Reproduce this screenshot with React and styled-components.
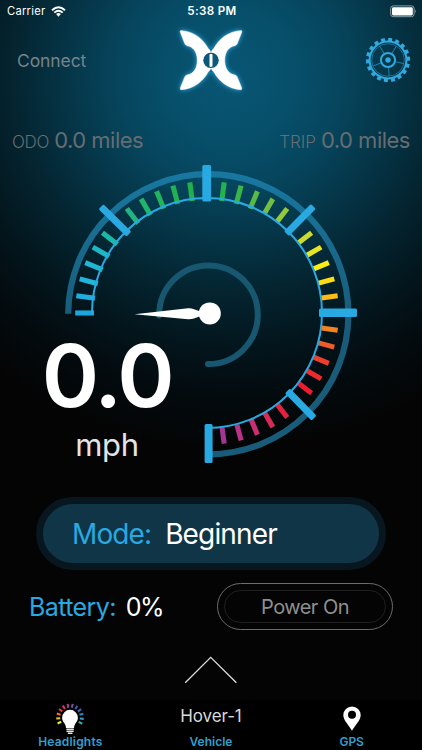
import React from "react";
import styled, { createGlobalStyle } from "styled-components";

const Global = createGlobalStyle`
  * { box-sizing: border-box; }
  html, body { margin: 0; padding: 0; background: #040404; }
  body { font-family: Inter, "Liberation Sans", sans-serif; overflow: hidden; }
  button { font-family: inherit; border: 0; background: none; padding: 0; }
  svg { display: block; flex: none; }
`;

const BLUE = "#29a9e1";

const Screen = styled.main`
  width: 422px;
  height: 750px;
  display: flex;
  flex-direction: column;
  overflow: hidden;
  color: #fff;
  background: radial-gradient(circle at 230px 75px,
    #085674 0, #07506c 60px, #06465e 110px, #053547 165px,
    #042531 215px, #03161d 270px, #030b0f 320px, #040404 375px);
`;

const Text = styled.span`
  font-size: ${(p) => p.$size}px;
  line-height: 1;
  font-weight: ${(p) => p.$weight || 400};
  letter-spacing: ${(p) => p.$track || 0}px;
  color: ${(p) => p.$color || "#fff"};
  white-space: pre;
`;

const StatusBar = styled.header`
  height: 22px;
  flex: none;
  display: grid;
  grid-template-columns: 1fr auto 1fr;
  align-items: center;
  padding: 1px 5px 0 7px;
`;

const Carrier = styled.div`
  display: flex;
  align-items: center;
  gap: 6px;
`;

const BatteryIcon = styled.svg`
  justify-self: end;
  margin-bottom: 1px;
`;

const TopBar = styled.nav`
  height: 86px;
  flex: none;
  display: grid;
  grid-template-columns: 165px 90px 1fr;
  align-items: start;
`;

const Connect = styled.button`
  justify-self: start;
  display: flex;
  padding: 30px 0 0 17px;
`;

const Settings = styled.button`
  justify-self: end;
  padding: 15px 11px 0 0;
`;

const Trips = styled.section`
  height: 47px;
  flex: none;
  display: flex;
  justify-content: space-between;
  align-items: flex-start;
  padding: 21px 12px 0 12px;
`;

const Reading = styled.div`
  display: flex;
  align-items: baseline;
  gap: 5px;
`;

const GaugeArea = styled.section`
  height: 330px;
  flex: none;
  display: grid;
  grid-template-columns: 422px;
  grid-template-rows: 330px;
`;

const Dial = styled.svg`
  grid-area: 1 / 1;
`;

const Speed = styled.div`
  grid-area: 1 / 1;
  align-self: end;
  justify-self: start;
  width: 132px;
  height: 153px;
  margin-left: 41px;
  display: flex;
  flex-direction: column;
  align-items: center;
  gap: 10px;
`;

const Mode = styled.button`
  width: 350px;
  height: 73px;
  flex: none;
  margin: 12px 0 0 36px;
  padding: 0 0 0 29px;
  display: flex;
  align-items: center;
  gap: 14px;
  border: 7px solid #08171f;
  border-radius: 37px;
  background: #103547;
`;

const PowerRow = styled.section`
  height: 47px;
  flex: none;
  margin-top: 13px;
  padding: 0 29px 0 29px;
  display: flex;
  align-items: center;
  justify-content: space-between;
`;

const Charge = styled.div`
  display: flex;
  gap: 10px;
  padding-top: 1px;
`;

const Power = styled.button`
  width: 176px;
  height: 47px;
  padding: 6px;
  border: 1px solid #6b6b6b;
  border-radius: 24px;
`;

const PowerInner = styled.span`
  height: 33px;
  display: flex;
  align-items: center;
  justify-content: center;
  border: 1px solid #202020;
  border-radius: 17px;
`;

const Expand = styled.button`
  height: 70px;
  flex: none;
  padding-top: 26px;
  display: flex;
  justify-content: center;
`;

const TabBar = styled.footer`
  height: 50px;
  flex: none;
  display: grid;
  grid-template-columns: repeat(3, 1fr);
  background: #000;
`;

const Tab = styled.button`
  display: flex;
  flex-direction: column;
  align-items: center;
  justify-content: space-between;
  padding: ${(p) => p.$top}px 0 2px;
`;

const polar = (cx, cy, r, deg) => {
  const a = (deg * Math.PI) / 180;
  return [cx + r * Math.sin(a), cy - r * Math.cos(a)];
};

const tickColors = [
  "#1ca6df", "#20addf", "#20b5dc", "#1eb8d4", "#1cb9c5", "#19b8a9", null,
  "#20b583", "#20b46d", "#22b35c", "#22b152", "#22b04c", null,
  "#24b24c", "#3bb54a", "#57b947", "#73bf44", "#91c83e", null,
  "#cbdb2f", "#e9e51f", "#fbed14", "#fddc12", "#fdbd19", null,
  "#f58220", "#f15a29", "#ee3e2c", "#ed2a2d", "#ec1c30", null,
  "#e4213f", "#d92a55", "#cb2f72", "#b93285", "#a33594", null,
];

const majors = [
  [206.7, 166.5, 206.7, 200, 8.8],
  [102, 207.8, 127.8, 233, 7],
  [312.3, 207.5, 287.5, 232.5, 7],
  [320.5, 312.8, 355.5, 312.8, 8.6],
  [288.5, 392, 313, 417, 7],
  [208.6, 425.5, 208.6, 461.5, 8],
];

function Gauge() {
  return (
    <Dial width="422" height="330" viewBox="0 155 422 330">
      <defs>
        <linearGradient id="track" gradientUnits="userSpaceOnUse" x1="0" y1="172" x2="0" y2="320">
          <stop offset="0" stopColor="#1878a1" />
          <stop offset="1" stopColor="#185c79" />
        </linearGradient>
      </defs>
      <path d="M68.2 313.8A140.1 140.1 0 1 1 208.3 454.4" fill="none" stroke="url(#track)" strokeWidth="6.2" />
      <path d="M159.2 315.5A49.3 49.3 0 1 1 208 364" fill="none" stroke="#185770" strokeWidth="6" strokeLinecap="round" />
      {tickColors.map((color, i) => {
        if (!color) return null;
        const deg = -90 + i * 7.5;
        const [x1, y1] = polar(207, 313, i < 16 ? 113 : 115.5, deg);
        const [x2, y2] = polar(207, 313, 131.8, deg);
        return <line key={i} x1={x1} y1={y1} x2={x2} y2={y2} stroke={color} strokeWidth="5.1" />;
      })}
      <path d="M92 313.5A115 115 0 1 1 207 428" fill="none" stroke={BLUE} strokeWidth="2" />
      {majors.map(([x1, y1, x2, y2, w]) => {
        const len = Math.hypot(x2 - x1, y2 - y1) + 3;
        const deg = (Math.atan2(y2 - y1, x2 - x1) * 180) / Math.PI;
        return (
          <rect
            key={`${x1}-${y1}`}
            x={-len / 2}
            y={-w / 2}
            width={len}
            height={w}
            rx="1.6"
            fill={BLUE}
            transform={`translate(${(x1 + x2) / 2} ${(y1 + y2) / 2}) rotate(${deg})`}
          />
        );
      })}
      <path d="M134.5 314.3L188 308.3Q191 308 194 309.3L202 312V315.5L194 318.5Q191 319.4 188 319.2Z" fill="#fff" />
      <circle cx="209.8" cy="313.4" r="11" fill="#fff" />
    </Dial>
  );
}

const wing =
  "M45 34Q47 31 51 32C88 36 114 57 129 85Q132 90 137 92V98A23 23 0 0 0 137 144V149Q132 151 129 156C114 184 88 205 50 209Q45 210 46 204L60 170Q62 166 67 165C85 162 97 146 97 121C97 96 85 80 67 77Q62 76 60 72Z";

function Logo() {
  return (
    <svg width="90" height="86" viewBox="0 6 270 258">
      <defs>
        <filter id="glow" x="-30%" y="-30%" width="160%" height="160%">
          <feDropShadow dx="0" dy="0" stdDeviation="8" floodColor="#32b4f0" floodOpacity="1" />
        </filter>
      </defs>
      <g filter="url(#glow)" fill="#fff" stroke="#fff" strokeWidth="1.5" strokeLinejoin="round">
        <path d={wing} />
        <path d={wing} transform="translate(276 0) scale(-1 1)" />
      </g>
      <circle cx="138" cy="121" r="22.5" fill="#0b5878" />
      <path d="M138 86V94M138 148V156" stroke="#0b5878" strokeWidth="3" />
      <rect x="133.5" y="102" width="9" height="38" rx="2" fill="#fff" />
    </svg>
  );
}

function Gear() {
  const teeth = Array.from({ length: 18 }, (_, i) => i * 20 + 6);
  const spokes = [-31, 31, 103, 176, 248];
  return (
    <svg width="46" height="46" viewBox="-23 -23 46 46" fill="none" stroke="#31a8df">
      <circle r="18.4" strokeWidth="2" />
      <circle r="16.3" strokeWidth="0.5" />
      {teeth.map((t) => (
        <rect key={t} x="-2" y="-22.1" width="4" height="3.5" fill="#31a8df" stroke="none" transform={`rotate(${t})`} />
      ))}
      {spokes.map((s) => (
        <line key={s} y1="-7" y2="-16" strokeWidth="0.6" transform={`rotate(${s})`} />
      ))}
      <circle r="7.1" strokeWidth="2" />
      <circle r="2.7" fill="#31a8df" stroke="none" />
    </svg>
  );
}

const rays = ["#e8e337", "#f0c52e", "#f16b35", "#e53b3e", "#c93d78", "#98468f", "#7652a0", "#4a55a5", "#3c68b1", "#3183be", "#299dd0", "#22b4ae"];

function Bulb() {
  return (
    <svg width="30" height="32" viewBox="0 0 30 32">
      {rays.map((color, i) => (
        <line key={color} x1="15" x2="15" y1="0.6" y2="4.6" stroke={color} strokeWidth="2.1" transform={`rotate(${-116 + i * 21.2} 15 14.4)`} />
      ))}
      <path d="M15 6.8A8 8 0 0 0 7.1 14.8C7.1 19.2 11 20.4 11 24.9H19.1C19.1 20.4 22.9 19.2 22.9 14.8A8 8 0 0 0 15 6.8Z" fill="#fff" />
      <path d="M11.4 26.3H18.8M11.5 28.3H18.7M12.8 30.3H17.4" stroke="#e4e4e4" strokeWidth="1.4" />
    </svg>
  );
}

export default function App() {
  return (
    <>
      <Global />
      <Screen>
        <StatusBar>
          <Carrier>
            <Text $size={11.2} $track={0.25}>Carrier</Text>
            <svg width="15" height="11" viewBox="0 0 15 11" fill="none" stroke="#fff" strokeWidth="1.9">
              <path d="M1 4.2Q7.5 -1.8 14 4.2M3.3 6.6Q7.5 2.8 11.7 6.6" />
              <path d="M7.5 10.7L5.1 8.1Q7.5 6 9.9 8.1Z" fill="#fff" stroke="none" />
            </svg>
          </Carrier>
          <Text $size={11.6} $weight={600} $track={0.35}>5:38 PM</Text>
          <BatteryIcon width="27" height="13" viewBox="0 0 27 13">
            <rect x="0.7" y="0.9" width="23.4" height="10.8" rx="2.5" fill="none" stroke="#8ba0aa" />
            <rect x="2" y="2.2" width="20.8" height="8.2" rx="1.3" fill="#fff" />
            <path d="M25 4.3Q26.6 6.2 25 8.2Z" fill="#8ba0aa" />
          </BatteryIcon>
        </StatusBar>

        <TopBar>
          <Connect><Text $size={17.5} $track={-0.1} $color="#76838a">Connect</Text></Connect>
          <Logo />
          <Settings aria-label="Settings"><Gear /></Settings>
        </TopBar>

        <Trips>
          <Reading>
            <Text $size={17} $weight={300} $track={-0.3} $color="#656d72">ODO</Text>
            <Text $size={22} $color="#656d72" $track={-0.5}>0.0 miles</Text>
          </Reading>
          <Reading>
            <Text $size={17} $weight={300} $color="#656d72">TRIP</Text>
            <Text $size={22} $color="#656d72" $track={-0.5}>0.0 miles</Text>
          </Reading>
        </Trips>

        <GaugeArea>
          <Gauge />
          <Speed>
            <Text $size={87} $weight={600} $track={-2.4}>0.0</Text>
            <Text $size={31} $color="#e4e4e4" $track={-0.3}>mph</Text>
          </Speed>
        </GaugeArea>

        <Mode>
          <Text $size={28} $color={BLUE} $track={-0.9}>Mode:</Text>
          <Text $size={28} $track={-0.85}>Beginner</Text>
        </Mode>

        <PowerRow>
          <Charge>
            <Text $size={25} $color={BLUE} $track={-0.6}>Battery:</Text>
            <Text $size={25} $track={-1.6}>0%</Text>
          </Charge>
          <Power>
            <PowerInner><Text $size={20} $color="#8f8f8f" $track={-0.55}>Power On</Text></PowerInner>
          </Power>
        </PowerRow>

        <Expand aria-label="Expand">
          <svg width="54" height="28" viewBox="0 0 54 28" fill="none" stroke="#ddd" strokeWidth="1.3">
            <path d="M1.2 26.7L26.7 1.3L52.4 26.7" />
          </svg>
        </Expand>

        <TabBar>
          <Tab $top={3}>
            <Bulb />
            <Text $size={12} $weight={600} $color="#319fce" $track={0.2}>Headlights</Text>
          </Tab>
          <Tab $top={8}>
            <Text $size={17} $color="#d8d8d8" $track={-0.1}>Hover-1</Text>
            <Text $size={12} $weight={600} $color="#319fce">Vehicle</Text>
          </Tab>
          <Tab $top={6}>
            <svg width="18" height="25" viewBox="0 0 18 25">
              <path fillRule="evenodd" fill="#fff" d="M9 .5A8.7 8.7 0 0 0 .3 9.2C.3 14 6 19.5 9 24.7C12 19.5 17.7 14 17.7 9.2A8.7 8.7 0 0 0 9 .5ZM9 4.8A4 4 0 1 1 9 12.8A4 4 0 1 1 9 4.8Z" />
            </svg>
            <Text $size={12} $weight={600} $color="#319fce" $track={-0.1}>GPS</Text>
          </Tab>
        </TabBar>
      </Screen>
    </>
  );
}
